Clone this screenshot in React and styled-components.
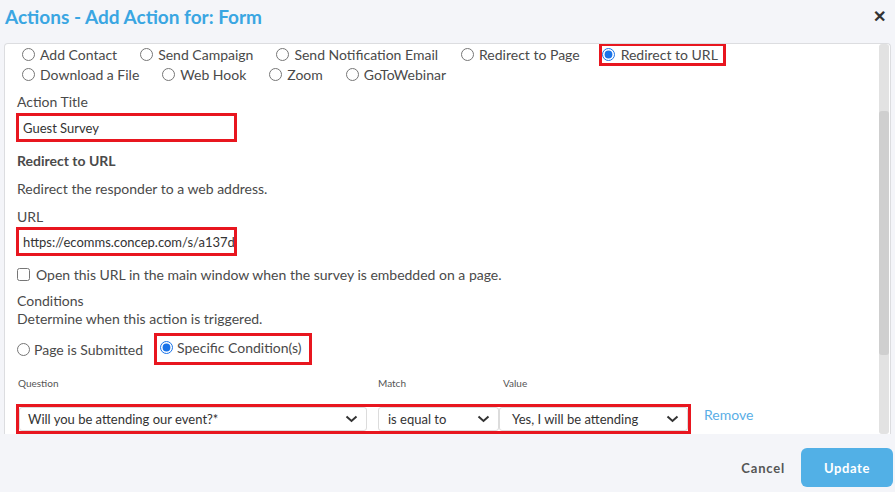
import React from "react"
import styled, { createGlobalStyle } from "styled-components"

const GlobalStyle = createGlobalStyle`
  html, body {
    margin: 0;
    padding: 0;
    background: #f4f5f9;
    font-family: Lato, "Open Sans", Arial, sans-serif;
    color: #4a4a4a;
  }
  * { box-sizing: border-box; }
`

const Page = styled.div`
  width: 895px;
  height: 492px;
  overflow: hidden;
  background: #f4f5f9;
`
const Header = styled.div`
  display: flex;
  align-items: center;
  justify-content: space-between;
  height: 34px;
  padding: 0 9px 2px 5px;
`
const Title = styled.h1`
  margin: 0;
  font-size: 19px;
  font-weight: 700;
  color: #3aa6e2;
`
const Close = styled.span`
  font-size: 16px;
  font-weight: 700;
  color: #333;
  line-height: 1;
`
const Panel = styled.div`
  display: flex;
  height: 391px;
  margin: 9px 4px 0 4px;
  background: #fff;
  border: 1px solid #dcdde0;
  border-bottom: none;
  border-radius: 4px 4px 0 0;
  overflow: hidden;
`
const Content = styled.div`
  flex: 1;
  padding: 0 0 0 12px;
  overflow: hidden;
`
const Scrollbar = styled.div`
  width: 10px;
  margin: 0 1px 0 0;
  background: #e2e2e2;
  border-radius: 3px;
  padding-top: 67px;
`
const Thumb = styled.div`
  height: 244px;
  background: #cfcfcf;
  border-radius: 3px;
`
const RadioRow = styled.div`
  display: flex;
  gap: 23px;
  height: 20px;
  align-items: center;
  padding-left: ${(p) => p.$indent || 0}px;
`
const Choice = styled.label`
  display: inline-flex;
  align-items: center;
  gap: ${(p) => (p.$marked ? "6px" : "5px")};
  font-size: 14px;
  color: #4a4a4a;
  white-space: nowrap;
  height: ${(p) => (p.$marked ? "23px" : "auto")};
  padding: ${(p) => (p.$marked ? "0 8px 0 3px" : "0")};
  margin-left: ${(p) => (p.$marked ? "-4px" : "0")};
  outline: ${(p) => (p.$marked ? "3px solid #e8161f" : "none")};
  outline-offset: -3px;
`
const Radio = styled.input.attrs({ type: "radio" })`
  width: 13px;
  height: 13px;
  margin: 0;
  accent-color: #1a73e8;
`
const Label = styled.div`
  font-size: 14px;
  line-height: 20px;
  color: #4a4a4a;
  margin-top: ${(p) => p.$top || 0}px;
`
const Heading = styled(Label)`
  font-weight: 700;
`
const TextBox = styled.div`
  width: 221px;
  height: 29px;
  margin-left: -1px;
  margin-top: ${(p) => p.$top || 0}px;
  border: 3px solid #e8161f;
  padding: 0 4px;
  display: flex;
  align-items: center;
  font-size: 13px;
  color: #333;
  white-space: nowrap;
  overflow: hidden;
`
const CheckRow = styled.label`
  display: flex;
  align-items: center;
  gap: 6px;
  height: 20px;
  margin-top: 8px;
  font-size: 14px;
  color: #4a4a4a;
`
const Check = styled.input.attrs({ type: "checkbox" })`
  width: 13px;
  height: 13px;
  margin: 0;
`
const Conditions = styled.div`
  margin-top: 8px;
  font-size: 14px;
  line-height: 18px;
`
const CondRow = styled.div`
  display: flex;
  align-items: center;
  gap: 3px;
  margin-top: 5px;
  height: 32px;
`
const BigChoice = styled.label`
  display: inline-flex;
  align-items: center;
  gap: 4px;
  font-size: 14px;
  color: #4a4a4a;
  height: 32px;
  padding: 0 8px 0 0;
  ${(p) =>
    p.$marked &&
    `
    border: 3px solid #e8161f;
    padding: 0 7px 3px 3px;
  `}
`
const ColLabels = styled.div`
  display: flex;
  margin-top: 12px;
  font-size: 10px;
  color: #555;
  height: 12px;
  line-height: 12px;
`
const ColLabel = styled.span`
  width: ${(p) => p.$w}px;
  padding-left: 1px;
`
const SelectRow = styled.div`
  display: flex;
  align-items: center;
  margin-top: 15px;
  margin-left: -1px;
`
const SelectGroup = styled.div`
  display: flex;
  border: 3px solid #e8161f;
  height: 30px;
`
const Select = styled.div`
  display: flex;
  align-items: center;
  justify-content: space-between;
  width: ${(p) => p.$w}px;
  height: 100%;
  margin-left: ${(p) => p.$gap || 0}px;
  padding: 0 8px 0 ${(p) => p.$pad || 8}px;
  border: 1px solid #dcdcdc;
  border-radius: 3px;
  font-size: 13px;
  color: #333;
  white-space: nowrap;
`
const Chevron = () => (
  <svg width="13" height="8" viewBox="0 0 13 8">
    <path d="M1.5 1.5 L6.5 6 L11.5 1.5" fill="none" stroke="#333" strokeWidth="2" />
  </svg>
)
const RemoveLink = styled.a`
  margin-left: 13px;
  font-size: 14px;
  color: #5aaee6;
  margin-top: -10px;
  cursor: pointer;
`
const Footer = styled.div`
  display: flex;
  justify-content: flex-end;
  align-items: center;
  gap: 16px;
  padding: 14px 2px 0 0;
`
const CancelButton = styled.button`
  border: none;
  background: none;
  font-family: inherit;
  font-size: 13px;
  font-weight: 700;
  letter-spacing: 0.8px;
  color: #555;
  padding: 0;
`
const UpdateButton = styled.button`
  width: 92px;
  height: 39px;
  border: none;
  border-radius: 6px;
  background: #52b0e6;
  color: #fff;
  font-family: inherit;
  font-size: 13px;
  font-weight: 700;
  letter-spacing: 0.6px;
`

const actionsRow1 = ["Add Contact", "Send Campaign", "Send Notification Email", "Redirect to Page"]
const actionsRow2 = ["Download a File", "Web Hook", "Zoom", "GoToWebinar"]

export default function App() {
  return (
    <Page>
      <GlobalStyle />
      <Header>
        <Title>Actions - Add Action for: Form</Title>
        <Close>✕</Close>
      </Header>
      <Panel>
        <Content>
          <RadioRow $indent={5}>
            {actionsRow1.map((a) => (
              <Choice key={a}>
                <Radio name="action" />
                {a}
              </Choice>
            ))}
            <Choice $marked>
              <Radio name="action" defaultChecked />
              Redirect to URL
            </Choice>
          </RadioRow>
          <RadioRow $indent={5}>
            {actionsRow2.map((a) => (
              <Choice key={a}>
                <Radio name="action" />
                {a}
              </Choice>
            ))}
          </RadioRow>
          <Label $top={8}>Action Title</Label>
          <TextBox $top={1}>Guest Survey</TextBox>
          <Heading $top={9}>Redirect to URL</Heading>
          <Label $top={8}>Redirect the responder to a web address.</Label>
          <Label $top={8}>URL</Label>
          <TextBox $top={0}>https://ecomms.concep.com/s/a137d</TextBox>
          <CheckRow>
            <Check />
            Open this URL in the main window when the survey is embedded on a page.
          </CheckRow>
          <Conditions>
            <div>Conditions</div>
            <div>Determine when this action is triggered.</div>
          </Conditions>
          <CondRow>
            <BigChoice>
              <Radio name="cond" />
              Page is Submitted
            </BigChoice>
            <BigChoice $marked>
              <Radio name="cond" defaultChecked />
              Specific Condition(s)
            </BigChoice>
          </CondRow>
          <ColLabels>
            <ColLabel $w={360}>Question</ColLabel>
            <ColLabel $w={125}>Match</ColLabel>
            <ColLabel $w={120}>Value</ColLabel>
          </ColLabels>
          <SelectRow>
            <SelectGroup>
              <Select $w={348} $pad={8}>
                Will you be attending our event?*
                <Chevron />
              </Select>
              <Select $w={121} $pad={9} $gap={11}>
                is equal to
                <Chevron />
              </Select>
              <Select $w={189} $pad={12}>
                Yes, I will be attending
                <Chevron />
              </Select>
            </SelectGroup>
            <RemoveLink>Remove</RemoveLink>
          </SelectRow>
        </Content>
        <Scrollbar>
          <Thumb />
        </Scrollbar>
      </Panel>
      <Footer>
        <CancelButton>Cancel</CancelButton>
        <UpdateButton>Update</UpdateButton>
      </Footer>
    </Page>
  )
}
